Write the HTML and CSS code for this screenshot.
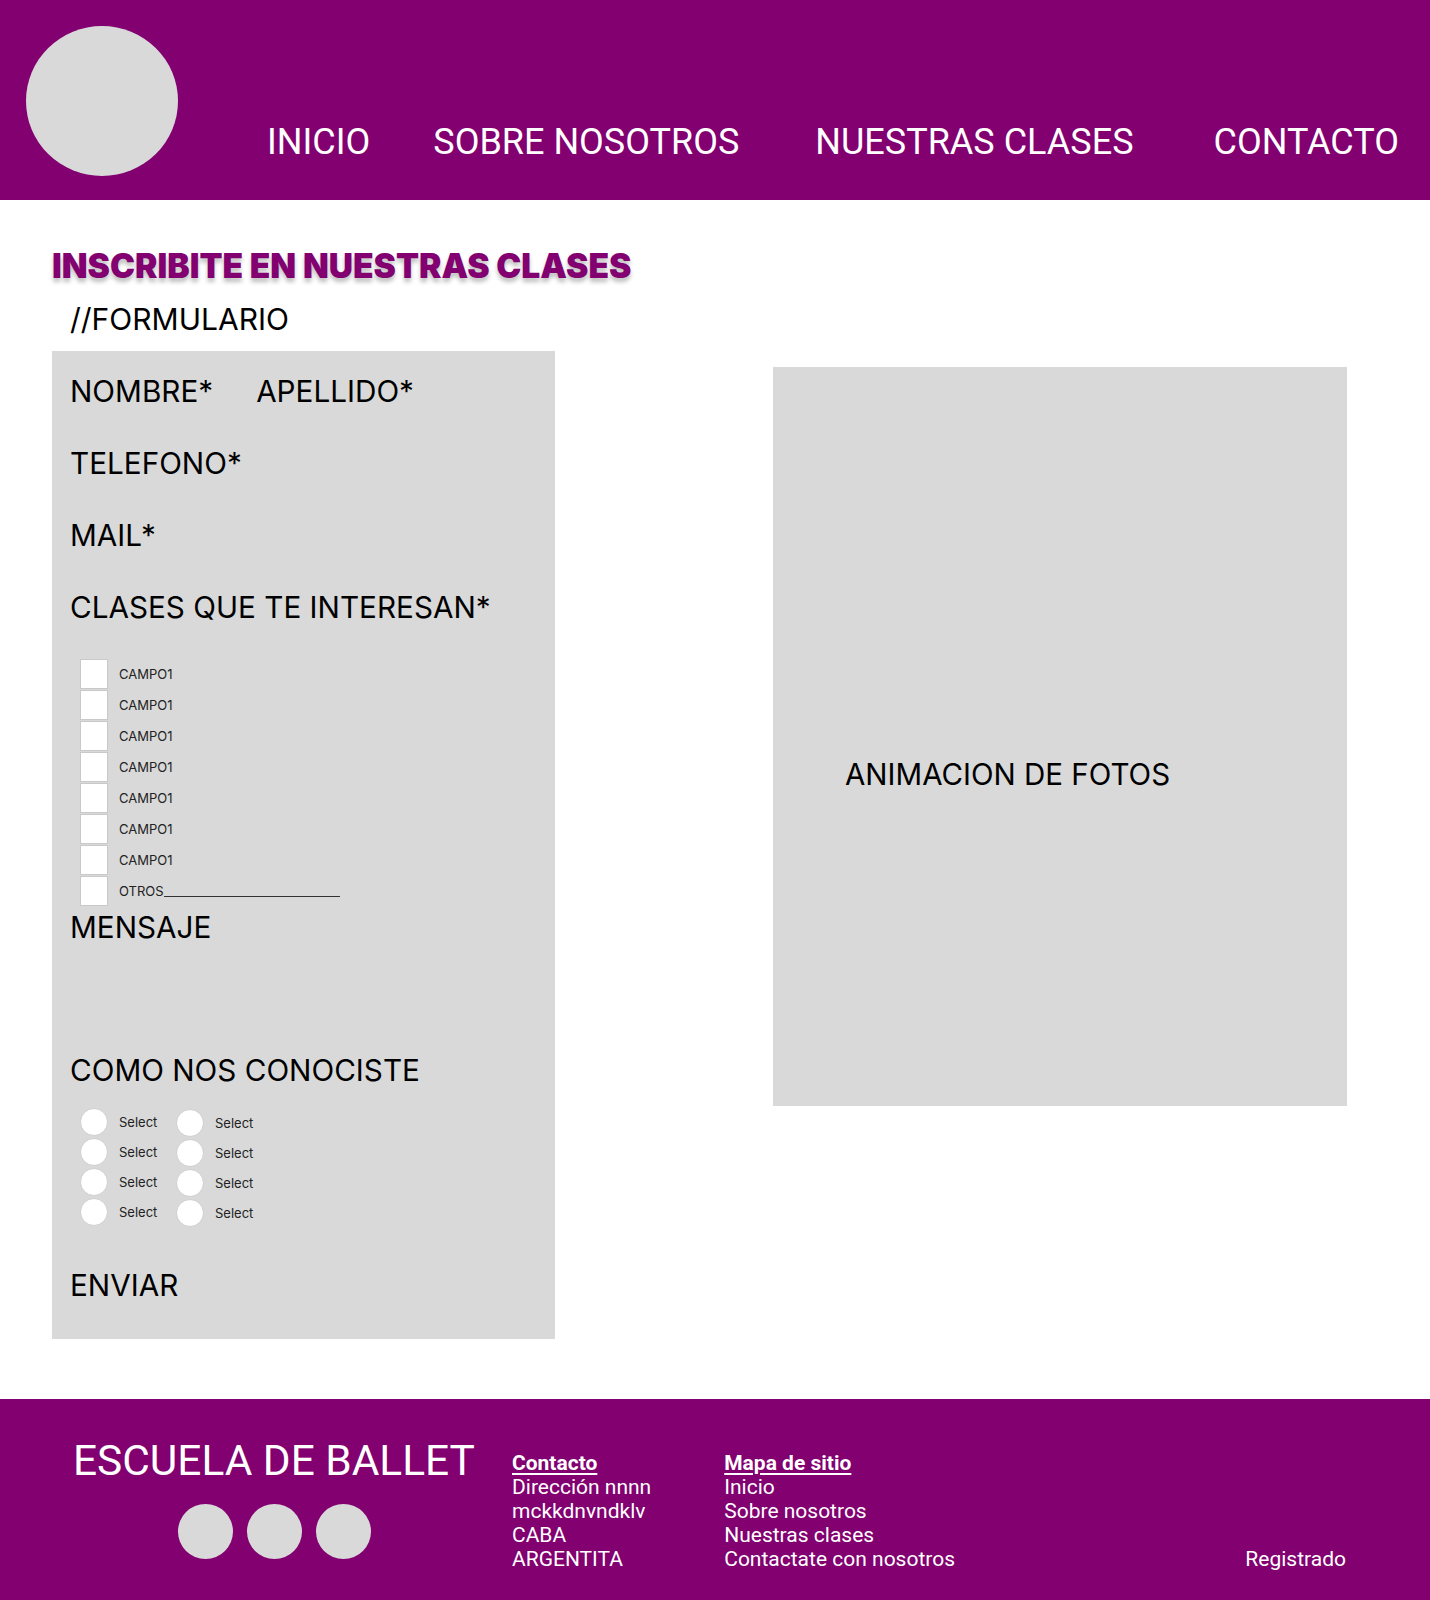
FILE: index.html
```html
<!DOCTYPE html>
<html lang="es">
<head>
  <meta charset="UTF-8" />
  <meta name="viewport" content="width=device-width, initial-scale=1.0" />
  <title>Escuela de Ballet – Inscripción</title>
  <link rel="stylesheet" href="styles.css">
</head>
<body>

  <div class="header">
    <div class="logo"></div>
    <div class="nav">
      <a class="nav-item nav-inicio" href="#">INICIO</a>
      <a class="nav-item nav-sobre" href="#">SOBRE NOSOTROS</a>
      <a class="nav-item nav-clases" href="#">NUESTRAS CLASES</a>
      <a class="nav-item nav-contacto" href="#">CONTACTO</a>
    </div>
  </div>

  <div class="container">
    <h1 class="page-title">INSCRIBITE EN NUESTRAS CLASES</h1>
    <div class="form-note">//FORMULARIO</div>

    <div class="content">
      <form class="form-card">
        <div class="field field-row"><span>NOMBRE*</span><span class="apellido">APELLIDO*</span></div>
        <div class="field">TELEFONO*</div>
        <div class="field">MAIL*</div>
        <div class="field field-last">CLASES QUE TE INTERESAN*</div>

        <div class="check-list">
          <label class="check"><span class="box"></span>CAMPO1</label>
          <label class="check"><span class="box"></span>CAMPO1</label>
          <label class="check"><span class="box"></span>CAMPO1</label>
          <label class="check"><span class="box"></span>CAMPO1</label>
          <label class="check"><span class="box"></span>CAMPO1</label>
          <label class="check"><span class="box"></span>CAMPO1</label>
          <label class="check"><span class="box"></span>CAMPO1</label>
          <label class="check"><span class="box"></span>OTROS<span class="otros-line"></span></label>
        </div>

        <div class="field mensaje">MENSAJE</div>
        <div class="field conociste">COMO NOS CONOCISTE</div>

        <div class="radio-grid">
          <div class="radio-col">
            <label class="radio"><span class="dot"></span>Select</label>
            <label class="radio"><span class="dot"></span>Select</label>
            <label class="radio"><span class="dot"></span>Select</label>
            <label class="radio"><span class="dot"></span>Select</label>
          </div>
          <div class="radio-col radio-col-2">
            <label class="radio"><span class="dot"></span>Select</label>
            <label class="radio"><span class="dot"></span>Select</label>
            <label class="radio"><span class="dot"></span>Select</label>
            <label class="radio"><span class="dot"></span>Select</label>
          </div>
        </div>

        <div class="field enviar">ENVIAR</div>
      </form>

      <div class="photos">
        <div class="photos-text">ANIMACION DE FOTOS</div>
      </div>
    </div>
  </div>

  <div class="footer">
    <div class="brand">
      <div class="brand-name">ESCUELA DE BALLET</div>
      <div class="socials">
        <span class="social"></span>
        <span class="social"></span>
        <span class="social"></span>
      </div>
    </div>

    <div class="footer-col">
      <div class="footer-head">Contacto</div>
      <div>Dirección nnnn</div>
      <div>mckkdnvndklv</div>
      <div>CABA</div>
      <div>ARGENTITA</div>
    </div>

    <div class="footer-col footer-map">
      <div class="footer-head">Mapa de sitio</div>
      <div>Inicio</div>
      <div>Sobre nosotros</div>
      <div>Nuestras clases</div>
      <div>Contactate con nosotros</div>
    </div>

    <div class="registrado">Registrado</div>
  </div>

</body>
</html>
```

FILE: styles.css
```css
body {
  margin: 0;
  font-family: Inter, "Liberation Sans", sans-serif;
  background: #ffffff;
  color: #000000;
}

/* header */
.header {
  background: #820070;
  height: 200px;
  display: flex;
  align-items: flex-start;
  padding-left: 26px;
  box-sizing: border-box;
}

.logo {
  width: 152px;
  height: 150px;
  border-radius: 50%;
  background: #d9d9d9;
  margin-top: 26px;
  flex-shrink: 0;
}

.nav {
  display: flex;
  margin-top: 121px;
  margin-left: 89px;
}

.nav-item {
  font-family: Roboto, "Liberation Sans", sans-serif;
  font-size: 36px;
  line-height: 42px;
  color: #ffffff;
  text-decoration: none;
}

.nav-sobre { margin-left: 63px; }
.nav-clases { margin-left: 76px; }
.nav-contacto { margin-left: 80px; }

/* main */
.container {
  padding: 0 0 60px 52px;
}

.page-title {
  margin: 46px 0 0 0;
  font-size: 33.6px;
  line-height: 40px;
  font-weight: 900;
  color: #820070;
  text-shadow: 0 4px 4px rgba(0, 0, 0, 0.25);
}

.form-note {
  font-size: 30px;
  line-height: 35px;
  margin: 16px 0 14px 18px;
}

.content {
  display: flex;
  align-items: flex-start;
}

.form-card {
  width: 503px;
  background: #d9d9d9;
  padding: 23px 0 37px 18px;
  box-sizing: border-box;
}

.field {
  font-size: 29.7px;
  line-height: 34px;
  margin-bottom: 38px;
}

.field-row {
  display: flex;
}

.apellido {
  margin-left: 43px;
}

.field-last {
  margin-bottom: 34px;
}

.check-list {
  padding-left: 10px;
}

.check {
  display: flex;
  align-items: center;
  height: 31px;
  font-size: 13px;
  color: #222;
}

.box {
  width: 28px;
  height: 30px;
  background: #fff;
  border: 1px solid #c9c9c9;
  margin-right: 11px;
  box-sizing: border-box;
}

.otros-line {
  display: inline-block;
  width: 176px;
  border-bottom: 1px solid #333;
  align-self: flex-end;
  margin-bottom: 9px;
}

.mensaje {
  margin-top: 4px;
  margin-bottom: 109px;
}

.conociste {
  margin-bottom: 20px;
}

.radio-grid {
  display: flex;
  padding-left: 10px;
}

.radio-col {
  width: 96px;
}

.radio-col-2 {
  margin-top: 1px;
}

.radio {
  display: flex;
  align-items: center;
  height: 30px;
  font-size: 13px;
  color: #222;
}

.dot {
  width: 28px;
  height: 28px;
  border-radius: 50%;
  background: #fff;
  border: 1px solid #cfcfcf;
  box-sizing: border-box;
  margin-right: 11px;
}

.enviar {
  margin-top: 40px;
  margin-bottom: 0;
}

.photos {
  width: 574px;
  height: 739px;
  background: #d9d9d9;
  margin-left: 218px;
  margin-top: 16px;
  padding: 390px 0 0 72px;
  box-sizing: border-box;
}

.photos-text {
  font-size: 29.5px;
  line-height: 34px;
}

/* footer */
.footer {
  background: #820070;
  height: 201px;
  display: flex;
  align-items: flex-start;
  padding: 0 0 0 73px;
  box-sizing: border-box;
  color: #fff;
  font-family: Roboto, "Liberation Sans", sans-serif;
}

.brand {
  width: 402px;
  margin-top: 38px;
}

.brand-name {
  font-size: 42.4px;
  line-height: 48px;
  white-space: nowrap;
}

.socials {
  display: flex;
  justify-content: center;
  gap: 14px;
  margin-top: 19px;
}

.social {
  width: 55px;
  height: 55px;
  border-radius: 50%;
  background: #d9d9d9;
}

.footer-col {
  margin-top: 52px;
  margin-left: 37px;
  font-size: 21px;
  line-height: 24px;
}

.footer-map {
  margin-left: 73px;
}

.footer-head {
  font-weight: 700;
  text-decoration: underline;
  text-underline-offset: 3px;
}

.registrado {
  margin-left: auto;
  margin-right: 84px;
  margin-top: 148px;
  font-size: 21px;
  line-height: 24px;
}
```
